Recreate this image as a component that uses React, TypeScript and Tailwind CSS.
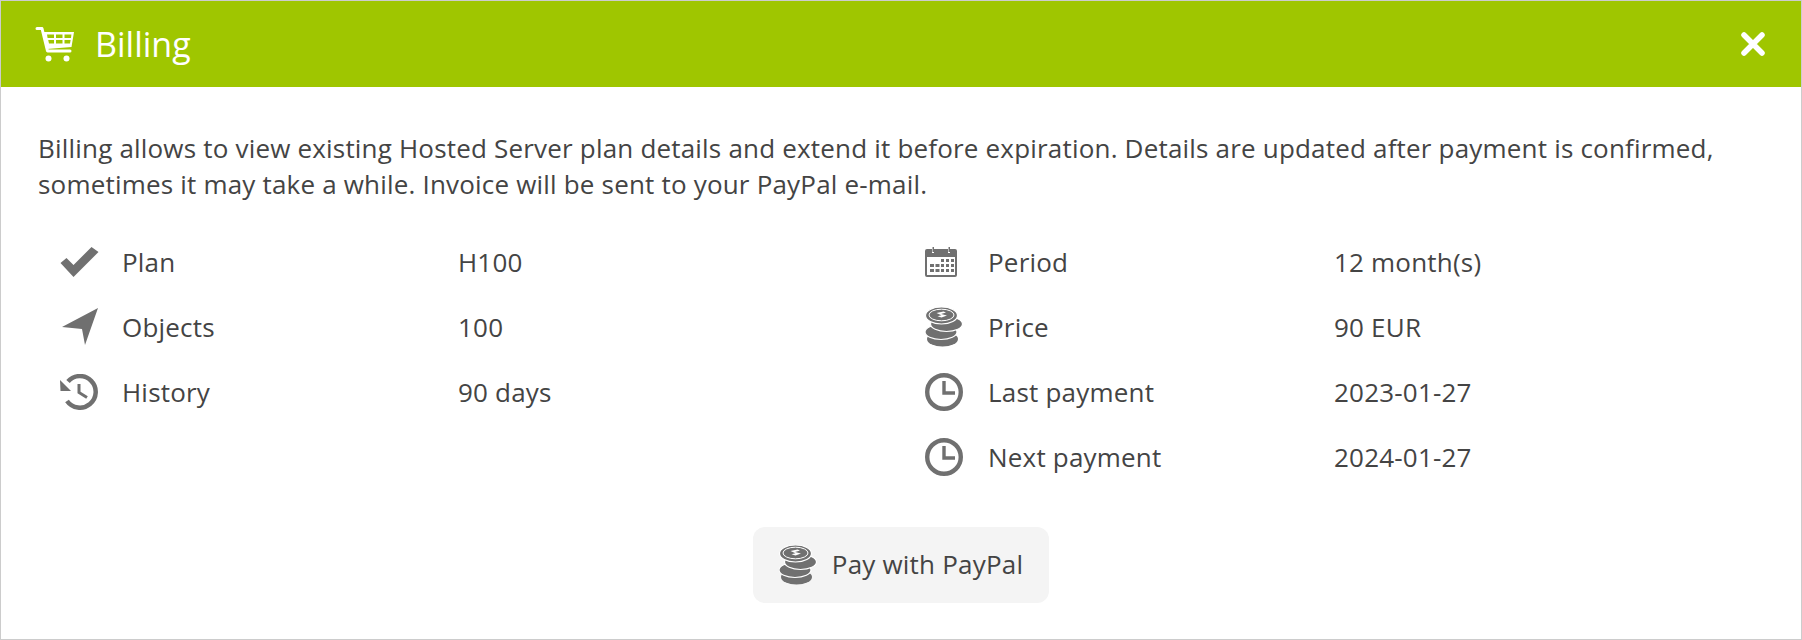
const textColor = 'text-[#444444]';

function CartIcon() {
  return (
    <svg width="40" height="36" viewBox="0 0 40 36" className="text-white">
      <path d="M2 2.500h5l5.500 22.500H35" fill="none" stroke="currentColor" strokeWidth="3" strokeLinecap="round" strokeLinejoin="round" />
      <path fillRule="evenodd" fill="currentColor" d="M8 6h31l-2.500 15L12 23zM12 8.500l.6 3.500H19V8.500zm9 0V12h6.500V8.500zm8.500 0V12h6.500l.4-3.500zM13.200 14l.8 3.500h5V14zm7.800 0v3.500h6.500V14zm8.500 0v3.500H35l.6-3.500z" />
      <circle cx="13.500" cy="32.500" r="3" fill="currentColor" />
      <circle cx="31.500" cy="32.500" r="3" fill="currentColor" />
    </svg>
  );
}

function CloseIcon() {
  return (
    <svg width="26" height="26" viewBox="0 0 26 26">
      <path d="M4 4l18 18M22 4L4 22" stroke="#fff" strokeWidth="5.500" strokeLinecap="round" />
    </svg>
  );
}

function CheckIcon() {
  return (
    <svg width="40" height="30" viewBox="0 0 40 30" fill="#707070">
      <path d="M1.500 16l13 14 25-25L32.500 0l-18 18-7-7z" />
    </svg>
  );
}

function ArrowIcon() {
  return (
    <svg width="40" height="38" viewBox="0 0 40 38" fill="#707070">
      <path d="M3 19L39 0 26 37 23 21z" />
    </svg>
  );
}

function HistoryIcon() {
  return (
    <svg width="40" height="36" viewBox="0 0 40 36" fill="none" stroke="#707070">
      <path d="M9 7.500A15.800 15.800 0 1 1 8 27" strokeWidth="4.500" />
      <path d="M1 6l.5 11H12z" fill="#707070" stroke="none" />
      <path d="M20 10v8.500l8 5" strokeWidth="3" />
    </svg>
  );
}

function CalendarIcon() {
  return (
    <svg width="32" height="30" viewBox="0 0 32 30" fill="#707070">
      <path fillRule="evenodd" d="M2 2h5v4h2V2h14v4h2V2h5a2 2 0 0 1 2 2v24a2 2 0 0 1-2 2H2a2 2 0 0 1-2-2V4a2 2 0 0 1 2-2zm0 8v18h28V10z" />
      <rect x="7.500" y="0" width="1.500" height="5" />
      <rect x="23.500" y="0" width="1.500" height="5" />
      <path d="M16 12h3v3h-3zM21 12h3v3h-3zM26 12h3v3h-3zM5 17h4v3H5zM10.500 17h4v3h-4zM16 17h3v3h-3zM21 17h3v3h-3zM26 17h3v3h-3zM5 22h4v3H5zM10.500 22h4v3h-4zM16 22h3v3h-3zM21 22h3v3h-3zM26 22h3v3h-3z" />
    </svg>
  );
}

function CoinsIcon() {
  return (
    <svg width="38" height="40" viewBox="0 0 38 40" fill="#707070" stroke="#fff" strokeWidth="1.200">
      <ellipse cx="17.500" cy="32" rx="15.500" ry="7.500" stroke="none" />
      <ellipse cx="16" cy="25" rx="16" ry="7.500" />
      <ellipse cx="21.500" cy="17" rx="16" ry="7.500" />
      <ellipse cx="16.500" cy="8.500" rx="16" ry="8.500" />
      <ellipse cx="16.500" cy="8" rx="12.500" ry="5.800" strokeWidth="1" />
      <path d="M11.500 6l7-1.500 2.500 1-5 1.500 6 1.500-5.500 2-4-1.200 4-1z" fill="#fff" stroke="none" />
    </svg>
  );
}

function ClockIcon() {
  return (
    <svg width="38" height="38" viewBox="0 0 38 38" fill="none" stroke="#707070">
      <circle cx="19" cy="19" r="16.800" strokeWidth="4.400" />
      <path d="M19 8v12h11" strokeWidth="3.400" />
    </svg>
  );
}

function InfoRow({ icon, label, value, labelW }: { icon: React.ReactNode; label: string; value: string; labelW: string }) {
  return (
    <div className="flex h-[65px] items-center">
      <div className="flex w-[63px] shrink-0 items-center">{icon}</div>
      <div className={`${labelW} shrink-0`}>{label}</div>
      <div>{value}</div>
    </div>
  );
}

export default function App() {
  return (
    <div className={`h-[640px] w-[1802px] border border-[#cccccc] bg-white font-['Open_Sans',sans-serif] ${textColor}`}>
      <div className="flex h-[86px] items-center justify-between bg-[#9fc600] pl-[34px] pr-[35px] text-white">
        <div className="flex items-center gap-[20px]">
          <CartIcon />
          <span className="text-[34px]">Billing</span>
        </div>
        <CloseIcon />
      </div>
      <div className="pl-[37px] pr-[37px] pt-[43px] text-[26px] leading-[36px] tracking-[0.2px]">
        <p className="pr-[20px] tracking-[0.19px]">
          Billing allows to view existing Hosted Server plan details and extend it before expiration. Details are updated after payment is confirmed, sometimes it may take a while. Invoice will be sent to your PayPal e-mail.
        </p>
        <div className="mt-[27px] flex">
          <div className="w-[866px] shrink-0 pl-[21px]">
            <InfoRow labelW="w-[336px]" icon={<CheckIcon />} label="Plan" value="H100" />
            <InfoRow labelW="w-[336px]" icon={<ArrowIcon />} label="Objects" value="100" />
            <InfoRow labelW="w-[336px]" icon={<HistoryIcon />} label="History" value="90 days" />
          </div>
          <div className="pl-[21px]">
            <InfoRow labelW="w-[346px]" icon={<CalendarIcon />} label="Period" value="12 month(s)" />
            <InfoRow labelW="w-[346px]" icon={<CoinsIcon />} label="Price" value="90 EUR" />
            <InfoRow labelW="w-[346px]" icon={<ClockIcon />} label="Last payment" value="2023-01-27" />
            <InfoRow labelW="w-[346px]" icon={<ClockIcon />} label="Next payment" value="2024-01-27" />
          </div>
        </div>
        <div className="mt-[38px] flex justify-center">
          <button className="flex h-[76px] w-[296px] items-center justify-center gap-[15px] rounded-[12px] bg-[#f4f4f4]">
            <CoinsIcon />
            <span className="mb-[2px]">Pay with PayPal</span>
          </button>
        </div>
      </div>
    </div>
  );
}
